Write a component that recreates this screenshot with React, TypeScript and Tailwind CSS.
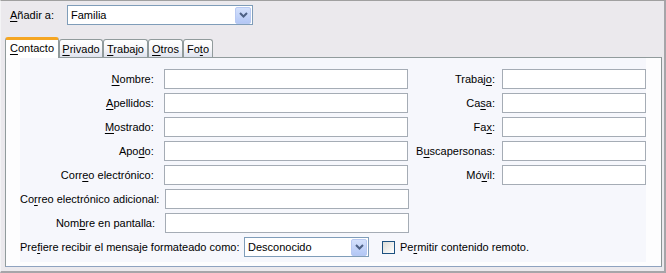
import React from "react";

const Chevron = () => (
  <svg width="9" height="6" viewBox="0 0 9 6" className="block">
    <path d="M1 1 L4.5 4.5 L8 1" fill="none" stroke="#4d6185" strokeWidth="2" />
  </svg>
);

const DropBtn = () => (
  <div className="w-[16px] h-[17px] mr-px rounded-[2px] border border-[#b8c9f2] bg-gradient-to-b from-[#d4e1fc] to-[#b3c7f5] flex items-center justify-center">
    <Chevron />
  </div>
);

const Acc = ({ children }: { children: React.ReactNode }) => (
  <span className="underline underline-offset-[2px] decoration-1">{children}</span>
);

const Input = ({ w }: { w: string }) => (
  <div className={`${w} h-[20px] bg-white border border-[#a5acb5]`} />
);

type TabProps = { children: React.ReactNode; w: string; selected?: boolean };
const Tab = ({ children, w, selected }: TabProps) =>
  selected ? (
    <div
      className={`${w} h-[21px] -mb-px relative z-10 bg-white border-x border-[#919b9c] rounded-t-[3px] border-t-[3px] border-t-[#f5a623] flex items-center justify-center pb-[2px]`}
    >
      {children}
    </div>
  ) : (
    <div
      className={`${w} h-[18px] border-t border-x border-[#919b9c] rounded-t-[3px] bg-gradient-to-b from-white via-[#f7f7f9] to-[#dfe3ee] flex items-center justify-center pt-px`}
    >
      {children}
    </div>
  );

const Row = ({
  label,
  right,
  rightLabel,
}: {
  label: React.ReactNode;
  right?: boolean;
  rightLabel?: React.ReactNode;
}) => (
  <div className="flex items-center h-[20px] mb-[4px]">
    <div className="w-[135px] text-right whitespace-nowrap">{label}</div>
    <div className="ml-[10px]">
      <Input w="w-[244px]" />
    </div>
    {right && (
      <>
        <div className="w-[88px] text-right whitespace-nowrap">{rightLabel}</div>
        <div className="ml-[7px]">
          <Input w="w-[144px]" />
        </div>
      </>
    )}
  </div>
);

export default function App() {
  return (
    <div className="w-[666px] h-[273px] box-border bg-[#ebe9ed] border-t border-t-[#a0a0a0] border-r-2 border-r-[#a6a5a9] border-b-2 border-b-[#a6a5a9] border-l border-l-[#f4f4f6] font-['Liberation_Sans',Arial,sans-serif] text-[11px] leading-none text-black overflow-hidden">
      {/* top row */}
      <div className="flex items-center mt-[4px] pl-[9px] h-[20px]">
        <div className="w-[57px] whitespace-nowrap">
          <Acc>A</Acc>ñadir a:
        </div>
        <div className="w-[186px] h-[20px] bg-white border border-[#7f9db9] flex items-center justify-between">
          <span className="pl-[3px]">Familia</span>
          <DropBtn />
        </div>
      </div>

      {/* tabs */}
      <div className="flex items-end mt-[12px] ml-[4px] h-[20px]">
        <Tab w="w-[54px]" selected>
          <span>
            <Acc>C</Acc>ontacto
          </span>
        </Tab>
        <Tab w="w-[44px]">
          <span>
            <Acc>P</Acc>rivado
          </span>
        </Tab>
        <Tab w="w-[45px]">
          <span>
            <Acc>T</Acc>rabajo
          </span>
        </Tab>
        <Tab w="w-[35px]">
          <span>
            <Acc>O</Acc>tros
          </span>
        </Tab>
        <Tab w="w-[30px]">
          <span>
            Fo<Acc>t</Acc>o
          </span>
        </Tab>
      </div>

      {/* panel */}
      <div className="ml-[4px] w-[657px] h-[210px] box-border border border-[#919b9c] border-r-[#8a9394] border-b-[#8fa3c0] bg-[#fdfdfe] relative">
        <div className="ml-[14px] w-[626px] h-[204px] bg-[#f6f7fc] pt-[11px]">
          <Row
            label={
              <>
                <Acc>N</Acc>ombre:
              </>
            }
            right
            rightLabel={
              <>
                Trabaj<Acc>o</Acc>:
              </>
            }
          />
          <Row
            label={
              <>
                <Acc>A</Acc>pellidos:
              </>
            }
            right
            rightLabel={
              <>
                Ca<Acc>s</Acc>a:
              </>
            }
          />
          <Row
            label={
              <>
                <Acc>M</Acc>ostrado:
              </>
            }
            right
            rightLabel={
              <>
                Fa<Acc>x</Acc>:
              </>
            }
          />
          <Row
            label={
              <>
                Apo<Acc>d</Acc>o:
              </>
            }
            right
            rightLabel={
              <>
                B<Acc>u</Acc>scapersonas:
              </>
            }
          />
          <Row
            label={
              <>
                Corr<Acc>e</Acc>o electrónico:
              </>
            }
            right
            rightLabel={
              <>
                Mó<Acc>v</Acc>il:
              </>
            }
          />
          <Row
            label={
              <>
                Co<Acc>r</Acc>reo electrónico adicional:
              </>
            }
          />
          <Row
            label={
              <>
                Nom<Acc>b</Acc>re en pantalla:
              </>
            }
          />
          <div className="flex items-center h-[20px]">
            <div className="w-[224px] whitespace-nowrap">
              Pre<Acc>f</Acc>iere recibir el mensaje formateado como:
            </div>
            <div className="w-[125px] h-[20px] bg-white border border-[#7f9db9] flex items-center justify-between">
              <span className="pl-[3px]">Desconocido</span>
              <DropBtn />
            </div>
            <div className="ml-[13px] w-[13px] h-[13px] border border-[#1c5180] bg-gradient-to-br from-[#dcdcd7] to-white" />
            <div className="ml-[5px] whitespace-nowrap">
              Pe<Acc>r</Acc>mitir contenido remoto.
            </div>
          </div>
        </div>
      </div>
    </div>
  );
}
